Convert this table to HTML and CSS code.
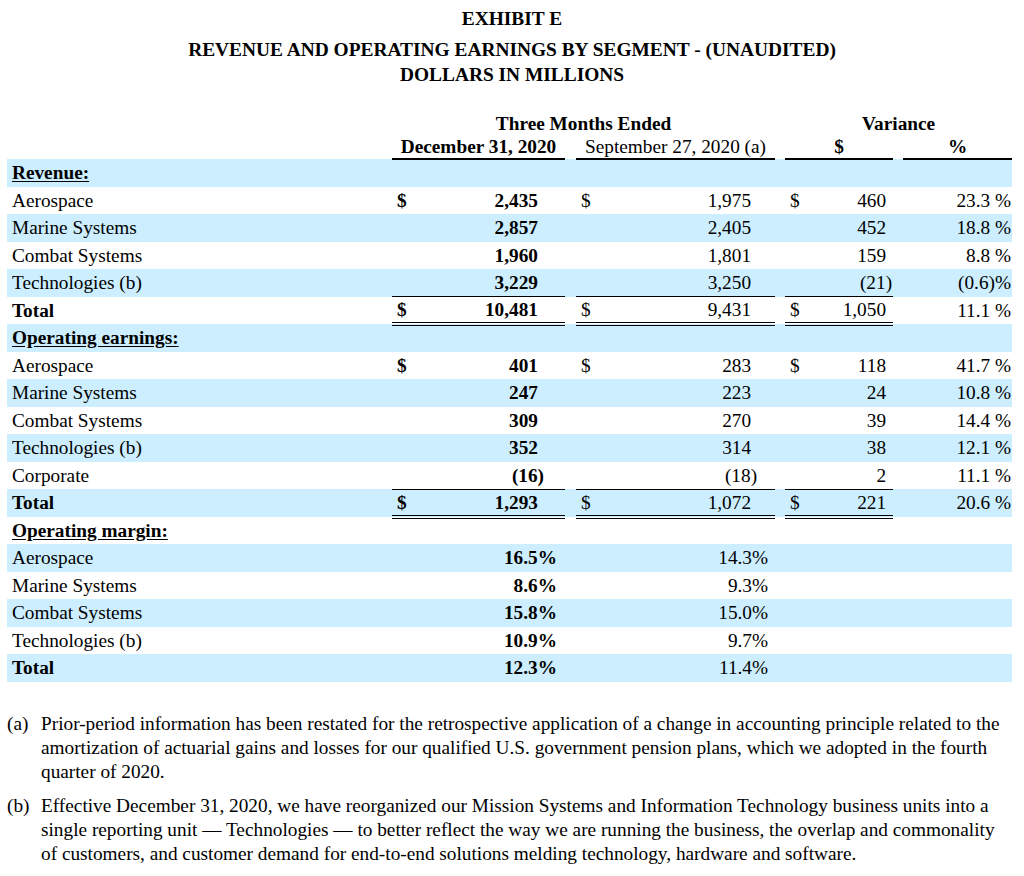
FILE: index.html
```html
<!DOCTYPE html>
<html>
<head>
<meta charset="utf-8">
<link rel="stylesheet" href="styles.css">
</head>
<body>
<div class="page">
  <header class="titles">
    <div class="t1">EXHIBIT E</div>
    <div class="t2">REVENUE AND OPERATING EARNINGS BY SEGMENT - (UNAUDITED)</div>
    <div class="t3">DOLLARS IN MILLIONS</div>
  </header>

  <table class="fin">
    <colgroup>
      <col class="c-label"><col class="c-d"><col class="c-v1"><col class="c-g1">
      <col class="c-d"><col class="c-v2"><col class="c-g2">
      <col class="c-d"><col class="c-v3"><col class="c-g2"><col class="c-pct">
    </colgroup>
    <thead>
      <tr class="h1">
        <th></th>
        <th colspan="5" class="ctr b">Three Months Ended</th>
        <th></th>
        <th colspan="4" class="ctr b">Variance</th>
      </tr>
      <tr class="h2">
        <th></th>
        <th colspan="2" class="ctr b ul2">December 31, 2020</th>
        <th></th>
        <th colspan="2" class="ctr reg ul2">September 27, 2020 (a)</th>
        <th></th>
        <th colspan="2" class="ctr b ul2">$</th>
        <th></th>
        <th class="ctr b ul2">%</th>
      </tr>
    </thead>
    <tbody>
      <tr class="blue"><td class="lbl sec">Revenue:</td><td></td><td></td><td></td><td></td><td></td><td></td><td></td><td></td><td></td><td></td></tr>
      <tr><td class="lbl">Aerospace</td><td class="dol b">$</td><td class="v1 b">2,435</td><td></td><td class="dol">$</td><td class="v2">1,975</td><td></td><td class="dol">$</td><td class="v3">460</td><td></td><td class="pct">23.3 %</td></tr>
      <tr class="blue"><td class="lbl">Marine Systems</td><td></td><td class="v1 b">2,857</td><td></td><td></td><td class="v2">2,405</td><td></td><td></td><td class="v3">452</td><td></td><td class="pct">18.8 %</td></tr>
      <tr><td class="lbl">Combat Systems</td><td></td><td class="v1 b">1,960</td><td></td><td></td><td class="v2">1,801</td><td></td><td></td><td class="v3">159</td><td></td><td class="pct">8.8 %</td></tr>
      <tr class="blue"><td class="lbl">Technologies (b)</td><td class="ul"></td><td class="v1 b ul">3,229</td><td></td><td class="ul"></td><td class="v2 ul">3,250</td><td></td><td class="ul"></td><td class="v3 ul">(21<span class="cp">)</span></td><td></td><td class="pct">(0.6)%</td></tr>
      <tr><td class="lbl b">Total</td><td class="dol b dul">$</td><td class="v1 b dul">10,481</td><td></td><td class="dol dul">$</td><td class="v2 dul">9,431</td><td></td><td class="dol dul">$</td><td class="v3 dul">1,050</td><td></td><td class="pct">11.1 %</td></tr>

      <tr class="blue"><td class="lbl sec">Operating earnings:</td><td></td><td></td><td></td><td></td><td></td><td></td><td></td><td></td><td></td><td></td></tr>
      <tr><td class="lbl">Aerospace</td><td class="dol b">$</td><td class="v1 b">401</td><td></td><td class="dol">$</td><td class="v2">283</td><td></td><td class="dol">$</td><td class="v3">118</td><td></td><td class="pct">41.7 %</td></tr>
      <tr class="blue"><td class="lbl">Marine Systems</td><td></td><td class="v1 b">247</td><td></td><td></td><td class="v2">223</td><td></td><td></td><td class="v3">24</td><td></td><td class="pct">10.8 %</td></tr>
      <tr><td class="lbl">Combat Systems</td><td></td><td class="v1 b">309</td><td></td><td></td><td class="v2">270</td><td></td><td></td><td class="v3">39</td><td></td><td class="pct">14.4 %</td></tr>
      <tr class="blue"><td class="lbl">Technologies (b)</td><td></td><td class="v1 b">352</td><td></td><td></td><td class="v2">314</td><td></td><td></td><td class="v3">38</td><td></td><td class="pct">12.1 %</td></tr>
      <tr><td class="lbl">Corporate</td><td class="ul"></td><td class="v1 b ul">(16<span class="cp">)</span></td><td></td><td class="ul"></td><td class="v2 ul">(18<span class="cp">)</span></td><td></td><td class="ul"></td><td class="v3 ul">2</td><td></td><td class="pct">11.1 %</td></tr>
      <tr class="blue"><td class="lbl b">Total</td><td class="dol b dul">$</td><td class="v1 b dul">1,293</td><td></td><td class="dol dul">$</td><td class="v2 dul">1,072</td><td></td><td class="dol dul">$</td><td class="v3 dul">221</td><td></td><td class="pct">20.6 %</td></tr>

      <tr><td class="lbl sec">Operating margin:</td><td></td><td></td><td></td><td></td><td></td><td></td><td></td><td></td><td></td><td></td></tr>
      <tr class="blue"><td class="lbl">Aerospace</td><td></td><td class="m1 b">16.5%</td><td></td><td></td><td class="m2">14.3%</td><td></td><td></td><td></td><td></td><td></td></tr>
      <tr><td class="lbl">Marine Systems</td><td></td><td class="m1 b">8.6%</td><td></td><td></td><td class="m2">9.3%</td><td></td><td></td><td></td><td></td><td></td></tr>
      <tr class="blue"><td class="lbl">Combat Systems</td><td></td><td class="m1 b">15.8%</td><td></td><td></td><td class="m2">15.0%</td><td></td><td></td><td></td><td></td><td></td></tr>
      <tr><td class="lbl">Technologies (b)</td><td></td><td class="m1 b">10.9%</td><td></td><td></td><td class="m2">9.7%</td><td></td><td></td><td></td><td></td><td></td></tr>
      <tr class="blue"><td class="lbl b">Total</td><td></td><td class="m1 b">12.3%</td><td></td><td></td><td class="m2">11.4%</td><td></td><td></td><td></td><td></td><td></td></tr>
    </tbody>
  </table>

  <div class="notes">
    <div class="note"><span class="mark">(a)</span><p>Prior-period information has been restated for the retrospective application of a change in accounting principle related to the amortization of actuarial gains and losses for our qualified U.S. government pension plans, which we adopted in the fourth quarter of 2020.</p></div>
    <div class="note"><span class="mark">(b)</span><p>Effective December 31, 2020, we have reorganized our Mission Systems and Information Technology business units into a single reporting unit — Technologies — to better reflect the way we are running the business, the overlap and commonality of customers, and customer demand for end-to-end solutions melding technology, hardware and software.</p></div>
  </div>
</div>
</body>
</html>
```

FILE: styles.css
```css
html, body {
  margin: 0;
  padding: 0;
  background: #ffffff;
}

body {
  font-family: "Liberation Serif", "Times New Roman", serif;
  font-size: 19.3px;
  color: #000000;
}

.page {
  padding: 6px 12px 0 7px;
}

.titles {
  text-align: center;
  font-weight: bold;
  font-size: 19.4px;
  line-height: 25px;
  padding-left: 5px;
}

.t1 {
  margin-bottom: 6px;
}

.fin {
  margin-top: 25px;
  width: 1005px;
  table-layout: fixed;
  border-collapse: collapse;
  border-spacing: 0;
}

.c-label { width: 385px; }
.c-d { width: 30px; }
.c-v1 { width: 143px; }
.c-g1 { width: 11px; }
.c-v2 { width: 169px; }
.c-g2 { width: 10px; }
.c-v3 { width: 78px; }
.c-pct { width: 109px; }

.fin th, .fin td {
  padding: 0;
  white-space: nowrap;
}

.fin thead tr {
  height: 23px;
}

.fin th {
  line-height: 23px;
  vertical-align: bottom;
}

.fin th.reg { font-weight: normal; }
.fin th.ctr { text-align: center; }

.fin th.ul2 {
  border-bottom: 2px solid #000;
}

.fin tbody tr {
  height: 27.5px;
}

.fin tbody td {
  line-height: 21px;
  vertical-align: middle;
}

.blue td {
  background: #cceeff;
}

.b { font-weight: bold; }

.lbl {
  padding-left: 5px !important;
  text-align: left;
}

.sec {
  font-weight: bold;
  text-decoration: underline;
  text-underline-offset: 2px;
}

.dol {
  text-align: left;
  padding-left: 5px !important;
}

.v1 { text-align: right; padding-right: 27px !important; }
.v2 { text-align: right; padding-right: 24px !important; }
.v3 { text-align: right; padding-right: 7px !important; }
.pct { text-align: right; padding-right: 1px !important; }
.m1 { text-align: right; padding-right: 8px !important; }
.m2 { text-align: right; padding-right: 7px !important; }

.cp {
  margin-right: -6px;
}

.ul {
  border-bottom: 1px solid #000;
}

.dul {
  border-bottom: 4px double #000;
}

.notes {
  margin-top: 30px;
  line-height: 24px;
}

.note {
  display: flex;
  margin-bottom: 10px;
}

.mark {
  flex: 0 0 34px;
}

.note p {
  margin: 0;
  width: 965px;
}
```
